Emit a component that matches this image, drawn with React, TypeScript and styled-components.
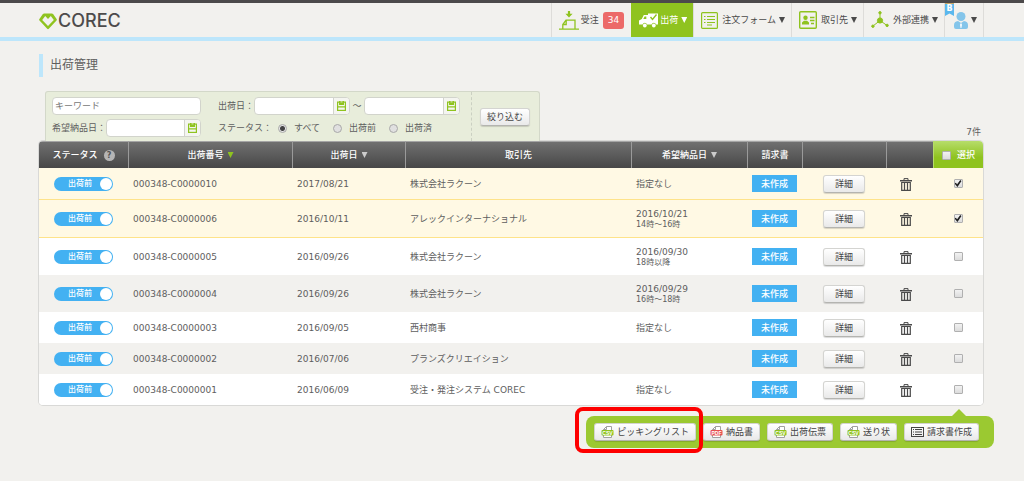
import React, { useState } from "react";
import styled, { createGlobalStyle, css } from "styled-components";

const GlobalStyle = createGlobalStyle`
  *, *::before, *::after { box-sizing: border-box; }
  body {
    margin: 0;
    background: #f2f1ee;
    color: #5e5e5e;
    font: 9px/12px "DejaVu Sans", "Noto Sans CJK JP", sans-serif;
  }
  button, input { font: inherit; color: inherit; }
  button { cursor: pointer; }
  svg { display: block; flex: none; }
`;

const Page = styled.div`
  min-height: 100vh;
`;

const TopBar = styled.div`
  height: 3px;
  background: #4c4a4b;
`;

const Header = styled.header`
  display: flex;
  justify-content: space-between;
  height: 38px;
  padding: 0 40px 0 39px;
  border-bottom: 4px solid #bde6fb;
`;

const Logo = styled.a`
  display: flex;
  align-items: center;
  gap: 1px;
  padding-top: 2px;
  color: #4d4b4b;
  font: 500 18px/32px Inter, sans-serif;
  text-decoration: none;
`;

const Nav = styled.nav`
  display: flex;
  border-right: 1px solid #dddcd9;
`;

const NavItem = styled.a<{ $active?: boolean; $tight?: boolean }>`
  position: relative;
  display: flex;
  align-items: center;
  gap: ${(p) => (p.$tight ? 2 : 4)}px;
  padding: 0 6px 0 7px;
  border-left: 1px solid #dddcd9;
  color: #4a4a4a;
  text-decoration: none;
  white-space: nowrap;
  ${(p) =>
    p.$active &&
    css`
      background: #8fc31f;
      border-color: #8fc31f;
      color: #fff;
    `}
`;

const NavLabel = styled.span`
  display: flex;
  align-items: center;
  gap: 3px;
`;

const Count = styled.span`
  margin: 0 1px 0 2px;
  padding: 2px 5px;
  border-radius: 3px;
  background: #ec6a68;
  color: #fff;
  line-height: 13px;
`;

const UserBox = styled.span`
  display: flex;
  align-items: center;
  gap: 3px;
  padding-left: 2px;
`;

const Ribbon = styled.span`
  position: absolute;
  top: 0;
  left: 0;
  width: 9px;
  height: 13px;
  border-top: 1px solid #c9a96a;
  background: #5bb8ee;
  clip-path: polygon(0 0, 100% 0, 100% 100%, 50% 80%, 0 100%);
  color: #fff;
  font-size: 8px;
  font-weight: 700;
  line-height: 9px;
  text-align: center;
`;

const Triangle = styled.span<{ $color?: string }>`
  flex: none;
  width: 6px;
  height: 6px;
  background: ${(p) => p.$color ?? "currentColor"};
  clip-path: polygon(0 0, 100% 0, 50% 100%);
`;

const Main = styled.main`
  padding: 13px 41px 24px 39px;
`;

const Title = styled.h1`
  margin: 0;
  padding-left: 7px;
  border-left: 4px solid #bde6fb;
  font-size: 12px;
  font-weight: 400;
  line-height: 23px;
`;

const FilterLine = styled.div`
  display: flex;
  justify-content: space-between;
  align-items: flex-end;
  padding: 14px 2px 0 6px;
`;

const ResultCount = styled.span`
  padding-bottom: 3px;
`;

const Filter = styled.form`
  display: flex;
  border: 1px solid #d3d8c9;
  border-bottom: 0;
  border-radius: 3px 3px 0 0;
  background: #e8eddb;
`;

const FilterColumn = styled.div`
  display: flex;
  flex-direction: column;
  gap: 4px;
  padding: 5px 11px 4px 6px;
`;

const FilterRow = styled.div<{ $gap?: number }>`
  display: flex;
  align-items: center;
  gap: ${(p) => p.$gap ?? 0}px;
  height: 18px;
  white-space: nowrap;
`;

const Tilde = styled.span`
  width: 14px;
  text-align: center;
`;

const FilterAction = styled.div`
  display: flex;
  align-items: center;
  padding: 0 9px 0 8px;
  border-left: 1px dashed #cbd0c2;
`;

const Keyword = styled.input`
  width: 149px;
  height: 18px;
  padding: 0 2px;
  border: 1px solid #d2d4cc;
  border-radius: 4px;
  background: #fff;
  &::placeholder { color: #777; opacity: 1; }
`;

const DateBox = styled.span<{ $wide?: boolean }>`
  display: flex;
  width: ${(p) => (p.$wide ? 96 : 95)}px;
  height: 18px;
  border: 1px solid #d2d4cc;
  border-radius: 4px;
  background: #fff;
  overflow: hidden;
`;

const DateInput = styled.input`
  flex: 1;
  min-width: 0;
  padding: 0 3px;
  border: 0;
  background: none;
`;

const DateButton = styled.button`
  display: grid;
  place-items: center;
  width: 16px;
  padding: 0;
  border: 0;
  border-left: 1px solid #d2d4cc;
  background: #f4f5f0;
`;

const RadioLabel = styled.label`
  display: flex;
  align-items: center;
  gap: 7px;
`;

const Radio = styled.input`
  appearance: none;
  width: 9px;
  height: 9px;
  margin: 0;
  border: 1px solid #a9a9a9;
  border-radius: 50%;
  background: #e0e0e0;
  &:checked { background: radial-gradient(circle, #444 0 2px, #e6e6e6 3px); }
`;

const Button = styled.button`
  display: inline-flex;
  align-items: center;
  justify-content: center;
  gap: 3px;
  height: 18px;
  padding: 0 6px;
  border: 1px solid #d4d4d1;
  border-bottom-color: #b4b4b0;
  border-radius: 3px;
  background: linear-gradient(#fff, #e9e9e9);
  box-shadow: 0 1px 1px rgba(0, 0, 0, 0.15);
  color: #444;
  white-space: nowrap;
`;

const Table = styled.table`
  width: 100%;
  table-layout: fixed;
  border-collapse: separate;
  border-spacing: 0;
  border-radius: 4px;
  background: #fff;
  box-shadow: 0 0 0 1px #d9d9d7;
  overflow: hidden;
`;

const Col = styled.col<{ $width?: number }>`
  width: ${(p) => (p.$width ? `${p.$width}px` : "auto")};
`;

const HeadCell = styled.th<{ $select?: boolean }>`
  height: 27px;
  padding: 0;
  border-top: 1px solid #a5a5a5;
  border-left: 1px solid #9a9a9a;
  background: linear-gradient(#707070, #474747);
  color: #fff;
  font-weight: 500;
  &:first-child { border-left: 0; }
  ${(p) =>
    p.$select &&
    css`
      border-color: #b5dc68;
      background: linear-gradient(#b4db66, #8fc31f 60%);
    `}
`;

const HeadInner = styled.span<{ $gap?: number }>`
  display: flex;
  align-items: center;
  justify-content: center;
  gap: ${(p) => p.$gap ?? 4}px;
`;

const Help = styled.button`
  width: 11px;
  height: 11px;
  padding: 0;
  border: 0;
  border-radius: 50%;
  background: #b5b5b5;
  color: #555;
  font-size: 8px;
  font-weight: 700;
  line-height: 11px;
`;

const Row = styled.tr<{ $checked: boolean; $striped: boolean; $tall: boolean }>`
  height: ${(p) => (p.$tall ? 37 : 31) + (p.$checked ? 1 : 0)}px;
  background: ${(p) => (p.$checked ? "#fff9e4" : p.$striped ? "#f2f1ee" : "#fff")};
  td { border-bottom: ${(p) => (p.$checked ? "1px solid #fee38a" : "0")}; }
`;

const Cell = styled.td`
  padding: 0 5px;
  vertical-align: middle;
  white-space: nowrap;
`;

const Centered = styled.span`
  display: flex;
  align-items: center;
  justify-content: center;
`;

const Time = styled.small`
  display: block;
  font-size: 8px;
  line-height: 10px;
`;

const Switch = styled.button`
  display: flex;
  align-items: center;
  justify-content: space-between;
  width: 59px;
  height: 14px;
  padding: 0 1px 0 14px;
  border: 0;
  border-radius: 7px;
  background: #43b1f2;
  color: #fff;
  font-size: 8px;
  font-weight: 500;
  &::after {
    content: "";
    width: 12px;
    height: 12px;
    border-radius: 50%;
    background: #fff;
  }
`;

const InvoiceButton = styled.button`
  height: 17px;
  width: 45px;
  padding: 0;
  border: 0;
  background: #43b1f2;
  color: #fff;
  font-weight: 500;
`;

const IconButton = styled.button`
  display: grid;
  place-items: center;
  padding: 2px 7px 0 0;
  border: 0;
  background: none;
`;

const Checkbox = styled.input`
  appearance: none;
  display: grid;
  place-items: center;
  width: 9px;
  height: 9px;
  margin: 0;
  border: 1px solid #b0b0b0;
  border-radius: 1px;
  background: linear-gradient(#f2f2f2, #dcdcdc);
  &:checked::after {
    content: "";
    width: 7px;
    height: 7px;
    background: #222;
    clip-path: polygon(0 50%, 18% 38%, 38% 60%, 82% 0, 100% 14%, 42% 100%);
  }
`;

const Footer = styled.div`
  display: flex;
  justify-content: flex-end;
  margin: 11px -11px 0 0;
`;

const ActionBar = styled.div`
  position: relative;
  display: flex;
  gap: 7px;
  padding: 7px 15px 7px 8px;
  border-radius: 8px;
  background: #9bc931;
  &::before {
    content: "";
    position: absolute;
    right: 28px;
    bottom: 100%;
    border: 7px solid transparent;
    border-top: 0;
    border-bottom-color: #9bc931;
  }
`;

const Highlight = styled.div`
  position: absolute;
  top: -9px;
  left: -11px;
  width: 128px;
  height: 46px;
  border: 4px solid #fe0000;
  border-radius: 8px;
  pointer-events: none;
`;

const green = "#8fc31f";

const LogoMark = () => (
  <svg width="18" height="17" viewBox="0 0 18 17" fill={green} fillRule="evenodd">
    <path d="M5.2.5h7.6q.8 0 1.300.6L17.600 6q.5.8-.1 1.500L9.800 15.800q-.8.8-1.600 0L.500 7.500Q-.1 6.800.4 6L3.900 1.100Q4.400.5 5.200.5zM6.200 3.100 3.200 6.900 9 13l5.800-6.100-3-3.800L9 5.900z" />
  </svg>
);

const OrderIcon = () => (
  <svg width="20" height="19" viewBox="0 0 20 19" fill="none" stroke={green} strokeWidth="1.3">
    <path d="M0 18.2h20M3.800 18v-4.500l3.200-4.300h9v9M7.200 9.500v4H3.800" />
    <path d="M8.9 0h2.200v2.800h2.500L10 6.400 6.400 2.800h2.500z" fill={green} stroke="none" />
  </svg>
);

const TruckIcon = () => (
  <svg width="19" height="15" viewBox="0 0 19 15">
    <path d="M9 .5h10v11h-2a2.300 2.300 0 0 0-4.400 0H8a2.300 2.300 0 0 0-4.400 0H0V7.500L2.800 6 4.800 2H9z" fill="#fff" />
    <path d="M4.300 6 5.600 3.400h1.700V6z" fill={green} />
    <path d="m11.500 4 2 2.500L17.500 1.500" fill="none" stroke={green} strokeWidth="1.400" />
    <circle cx="5.800" cy="12.500" r="1.900" fill="#fff" />
    <circle cx="14.800" cy="12.500" r="1.900" fill="#fff" />
  </svg>
);

const FormIcon = () => (
  <svg width="17" height="17" viewBox="0 0 17 17" fill="none" stroke={green} strokeWidth="1.2">
    <rect x=".6" y=".6" width="15.8" height="15.8" rx="1" />
    <path d="M3 4.500h1.500M6 4.500h8M3 7.500h1.500M6 7.500h8M3 10.500h1.500M6 10.500h8M6 13h5" />
  </svg>
);

const PartnerIcon = () => (
  <svg width="18" height="18" viewBox="0 0 18 18">
    <rect x=".7" y=".7" width="16.6" height="16.6" rx="1" fill="none" stroke={green} strokeWidth="1.4" />
    <circle cx="6.500" cy="6.800" r="2.200" fill={green} />
    <path d="M3 13.500v-2l2-1.800h3l2 1.800v2z" fill={green} />
    <path d="M11 6.500h4.500M11 9.500h4.500M12 12.500h3" stroke={green} strokeWidth="1.500" />
  </svg>
);

const LinkIcon = () => (
  <svg width="18" height="18" viewBox="0 0 18 18" fill={green} stroke={green}>
    <path d="M9 2v7.500L2 15M9 9.500l7 5" fill="none" />
    <circle cx="9" cy="9.500" r="2.600" />
    <circle cx="9" cy="1.800" r="1.200" />
    <circle cx="1.900" cy="15.200" r="1.200" />
    <circle cx="16.100" cy="14.400" r="1.200" />
  </svg>
);

const UserIcon = () => (
  <svg width="14" height="17" viewBox="0 0 14 17">
    <circle cx="7" cy="4.500" r="4.500" fill="#84c5ea" />
    <path d="M0 15v-2Q0 9.500 4 9l3 2 3-2q4 .5 4 4v2q0 2-2 2H2q-2 0-2-2z" fill="#84c5ea" />
    <path d="m7 11-1 1.500.6 3.500h.8l.6-3.500z" fill="#fff" />
  </svg>
);

const CalendarIcon = () => (
  <svg width="9" height="10" viewBox="0 0 9 10">
    <rect x=".6" y="1.100" width="7.800" height="8.300" fill="none" stroke={green} strokeWidth="1.200" />
    <path d="M2 0h1.500v2h2V0H7v4H2zM1 5.200h7v1.300H1z" fill={green} />
  </svg>
);

const TrashIcon = () => (
  <svg width="12" height="13" viewBox="0 0 12 13" fill="none" stroke="#4a4a4a">
    <path d="M0 2.700h12" strokeWidth="1.500" />
    <path d="M4 2V.6h4V2" />
    <path d="M1.700 4.500h8.600v7.900H1.700zM4.500 5v7M7.500 5v7" strokeWidth="1.200" />
  </svg>
);

const FileIcon = ({ kind }: { kind: "CSV" | "PDF" }) => {
  const color = kind === "CSV" ? green : "#e8504f";
  return (
    <svg width="13" height="12" viewBox="0 0 13 12">
      <path d="M2.500 11.500v-8l3-3h5v11zM5.500.5v3h-3" fill="#fff" stroke="#a0a0a0" />
      <rect x=".5" y="4" width="12" height="5.500" rx="1" fill={color} />
      <text x="6.500" y="8.600" textAnchor="middle" fontFamily="Liberation Sans" fontSize="5" fontWeight="700" fill="#fff">
        {kind}
      </text>
    </svg>
  );
};

const ListIcon = () => (
  <svg width="13" height="10" viewBox="0 0 13 10" fill="none" stroke="#444">
    <rect x=".5" y=".5" width="12" height="9" />
    <path d="M2 2.500h1M2 5h1M2 7.500h1M4 2.500h7M4 5h7M4 7.500h7" />
  </svg>
);

interface Shipment {
  id: string;
  shipped: string;
  partner: string;
  due: string;
  time?: string;
}

const shipments: Shipment[] = [
  { id: "000348-C0000010", shipped: "2017/08/21", partner: "株式会社ラクーン", due: "指定なし" },
  { id: "000348-C0000006", shipped: "2016/10/11", partner: "アレックインターナショナル", due: "2016/10/21", time: "14時～16時" },
  { id: "000348-C0000005", shipped: "2016/09/26", partner: "株式会社ラクーン", due: "2016/09/30", time: "18時以降" },
  { id: "000348-C0000004", shipped: "2016/09/26", partner: "株式会社ラクーン", due: "2016/09/29", time: "16時～18時" },
  { id: "000348-C0000003", shipped: "2016/09/05", partner: "西村商事", due: "指定なし" },
  { id: "000348-C0000002", shipped: "2016/07/06", partner: "プランズクリエイション", due: "" },
  { id: "000348-C0000001", shipped: "2016/06/09", partner: "受注・発注システム COREC", due: "指定なし" },
];

const columnWidths = [89, 164, 113, undefined, 116, 55, 84, 47, 50];
const statuses = ["すべて", "出荷前", "出荷済"];

const DateField = ({ id, label, wide }: { id: string; label?: string; wide?: boolean }) => (
  <DateBox $wide={wide}>
    <DateInput id={id} type="text" aria-label={label} />
    <DateButton type="button" aria-label="カレンダー">
      <CalendarIcon />
    </DateButton>
  </DateBox>
);

export default function App() {
  const [selected, setSelected] = useState<string[]>(["000348-C0000010", "000348-C0000006"]);
  const toggle = (id: string) =>
    setSelected((s) => (s.includes(id) ? s.filter((x) => x !== id) : [...s, id]));
  const allSelected = selected.length === shipments.length;

  return (
    <Page>
      <GlobalStyle />
      <TopBar />
      <Header>
        <Logo href="#">
          <LogoMark />
          COREC
        </Logo>
        <Nav>
          <NavItem href="#" $tight>
            <OrderIcon />
            <NavLabel>受注</NavLabel>
            <Count>34</Count>
          </NavItem>
          <NavItem href="#" $active $tight>
            <TruckIcon />
            <NavLabel>出荷 <Triangle /></NavLabel>
          </NavItem>
          <NavItem href="#">
            <FormIcon />
            <NavLabel>注文フォーム <Triangle /></NavLabel>
          </NavItem>
          <NavItem href="#">
            <PartnerIcon />
            <NavLabel>取引先 <Triangle /></NavLabel>
          </NavItem>
          <NavItem href="#">
            <LinkIcon />
            <NavLabel>外部連携 <Triangle /></NavLabel>
          </NavItem>
          <NavItem href="#" aria-label="アカウント">
            <Ribbon>B</Ribbon>
            <UserBox>
              <UserIcon />
              <Triangle />
            </UserBox>
          </NavItem>
        </Nav>
      </Header>

      <Main>
        <Title>出荷管理</Title>
        <FilterLine>
          <Filter onSubmit={(e) => e.preventDefault()}>
            <FilterColumn>
              <FilterRow>
                <Keyword type="text" placeholder="キーワード" aria-label="キーワード" />
              </FilterRow>
              <FilterRow>
                <label htmlFor="due">希望納品日：</label>
                <DateField id="due" />
              </FilterRow>
            </FilterColumn>
            <FilterColumn>
              <FilterRow>
                <label htmlFor="from">出荷日：</label>
                <DateField id="from" wide />
                <Tilde>～</Tilde>
                <DateField id="to" label="出荷日（終了）" wide />
              </FilterRow>
              <FilterRow $gap={6}>
                <span>ステータス：</span>
                <FilterRow $gap={13} role="radiogroup" aria-label="ステータス">
                  {statuses.map((s, i) => (
                    <RadioLabel key={s}>
                      <Radio type="radio" name="status" defaultChecked={i === 0} />
                      {s}
                    </RadioLabel>
                  ))}
                </FilterRow>
              </FilterRow>
            </FilterColumn>
            <FilterAction>
              <Button type="submit">絞り込む</Button>
            </FilterAction>
          </Filter>
          <ResultCount>7件</ResultCount>
        </FilterLine>

        <Table>
          <colgroup>
            {columnWidths.map((w, i) => (
              <Col key={i} $width={w} />
            ))}
          </colgroup>
          <thead>
            <tr>
              <HeadCell>
                <HeadInner $gap={6}>
                  ステータス <Help type="button" aria-label="ヘルプ">?</Help>
                </HeadInner>
              </HeadCell>
              <HeadCell><HeadInner>出荷番号 <Triangle $color={green} /></HeadInner></HeadCell>
              <HeadCell><HeadInner>出荷日 <Triangle $color="#ccc" /></HeadInner></HeadCell>
              <HeadCell>取引先</HeadCell>
              <HeadCell><HeadInner>希望納品日 <Triangle $color="#ccc" /></HeadInner></HeadCell>
              <HeadCell>請求書</HeadCell>
              <HeadCell />
              <HeadCell />
              <HeadCell $select>
                <HeadInner as="label" $gap={6}>
                  <Checkbox
                    type="checkbox"
                    checked={allSelected}
                    onChange={() => setSelected(allSelected ? [] : shipments.map((s) => s.id))}
                  />
                  選択
                </HeadInner>
              </HeadCell>
            </tr>
          </thead>
          <tbody>
            {shipments.map((s, i) => (
              <Row key={s.id} $checked={selected.includes(s.id)} $striped={i % 2 === 1} $tall={!!s.time}>
                <Cell>
                  <Centered><Switch type="button" role="switch" aria-checked="true">出荷前</Switch></Centered>
                </Cell>
                <Cell>{s.id}</Cell>
                <Cell>{s.shipped}</Cell>
                <Cell>{s.partner}</Cell>
                <Cell>
                  {s.due}
                  {s.time && <Time>{s.time}</Time>}
                </Cell>
                <Cell>
                  <Centered><InvoiceButton type="button">未作成</InvoiceButton></Centered>
                </Cell>
                <Cell>
                  <Centered><Button type="button">&ensp;詳細&ensp;</Button></Centered>
                </Cell>
                <Cell>
                  <Centered>
                    <IconButton type="button" aria-label="削除"><TrashIcon /></IconButton>
                  </Centered>
                </Cell>
                <Cell>
                  <Centered>
                    <Checkbox
                      type="checkbox"
                      aria-label={`${s.id} を選択`}
                      checked={selected.includes(s.id)}
                      onChange={() => toggle(s.id)}
                    />
                  </Centered>
                </Cell>
              </Row>
            ))}
          </tbody>
        </Table>

        <Footer>
          <ActionBar>
            <Button type="button"><FileIcon kind="CSV" />ピッキングリスト</Button>
            <Button type="button"><FileIcon kind="PDF" />納品書</Button>
            <Button type="button"><FileIcon kind="CSV" />出荷伝票</Button>
            <Button type="button"><FileIcon kind="CSV" />送り状</Button>
            <Button type="button"><ListIcon />請求書作成</Button>
            <Highlight />
          </ActionBar>
        </Footer>
      </Main>
    </Page>
  );
}
